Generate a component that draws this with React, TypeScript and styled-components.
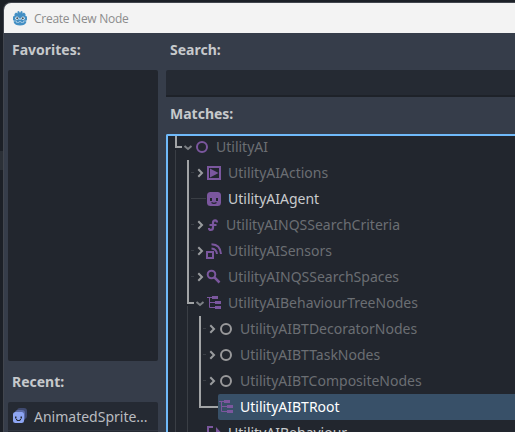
import React from "react";
import styled, { createGlobalStyle } from "styled-components";

const GlobalStyle = createGlobalStyle`
  * { box-sizing: border-box; }
  html, body { margin: 0; height: 100%; overflow: hidden; background: #1c2027; }
  body { font-family: "Noto Sans", sans-serif; font-size: 14px; }
`;

const Desktop = styled.div`
  height: 432px;
  width: 515px;
  padding: 2px 0 0 3px;
  overflow: hidden;
  display: flex;
  background: linear-gradient(#2b3037, #2b3037) 0 151px / 3px 19px no-repeat #1c2027;
`;

const Dialog = styled.div`
  flex: 1;
  min-width: 0;
  display: flex;
  flex-direction: column;
  border: 1px solid #42464e;
  border-width: 1px 0 0 1px;
  border-radius: 8px 0 0 0;
  background: #363d4a;
  overflow: hidden;
`;

const TitleBar = styled.div`
  flex: none;
  height: 30px;
  display: flex;
  align-items: center;
  gap: 7px;
  padding-left: 9px;
  background: #f3f3f3;
  color: #8c8c8c;
  font-family: "Open Sans", sans-serif;
  font-size: 12px;
  letter-spacing: -0.27px;
`;

const Content = styled.div`
  flex: 1;
  min-height: 0;
  display: flex;
  gap: 8px;
  padding-left: 4px;
`;

const Column = styled.div<{ $width?: number }>`
  display: flex;
  flex-direction: column;
  min-width: 0;
  flex: ${(p) => (p.$width ? `0 0 ${p.$width}px` : "1")};
`;

const Heading = styled.div<{ $height: number; $lift?: number }>`
  flex: none;
  height: ${(p) => p.$height}px;
  padding: 0 0 ${(p) => p.$lift ?? 0}px 4px;
  display: flex;
  align-items: center;
  font-weight: 700;
  color: #c6c9cc;
`;

const FavoritesList = styled.div`
  flex: none;
  height: 291px;
  border-radius: 2px;
  background: #22262e;
`;

const RecentList = styled.div`
  flex: 1;
  border-radius: 2px 2px 0 0;
  background: #252a33;
  overflow: hidden;
`;

const RecentItem = styled.div`
  height: 29px;
  display: flex;
  align-items: center;
  gap: 6px;
  padding-left: 4px;
  color: #b9bcc0;
  border-bottom: 1px solid #303640;
  white-space: nowrap;
`;

const SearchField = styled.div`
  flex: none;
  height: 27px;
  border-radius: 2px 0 0 0;
  border-bottom: 2px solid #1e2229;
  background: #252a33;
`;

const Tree = styled.div`
  position: relative;
  flex: 1;
  min-height: 0;
  overflow: hidden;
  border: 2px solid #70bafa;
  border-width: 2px 0 0 2px;
  border-radius: 2px 0 0 0;
  background: #22262e;
`;

const Rows = styled.div`
  margin-top: -2px;
`;

const Guides = styled.svg`
  position: absolute;
  left: 0;
  top: 0;
`;

const TreeRow = styled.div<{ $depth: number }>`
  height: 26px;
  display: flex;
  align-items: stretch;
  padding-left: ${(p) => 14 + p.$depth * 12}px;
`;

const ArrowCell = styled.div`
  width: 12px;
  flex: none;
  display: flex;
  align-items: center;
`;

type Tone = "dim" | "normal" | "selected";

const ItemCell = styled.div<{ $tone: Tone }>`
  flex: 1;
  display: flex;
  align-items: center;
  gap: 6px;
  white-space: nowrap;
  color: ${(p) => ({ dim: "#6b6e73", normal: "#c9cbcd", selected: "#ffffff" })[p.$tone]};
  background: ${(p) => (p.$tone === "selected" ? "#385068" : "transparent")};
  border-radius: 2px 0 0 2px;
`;

const ItemLabel = styled.span`
  padding-bottom: 2px;
`;

type IconName = "ring" | "action" | "agent" | "criteria" | "sensor" | "search" | "tree" | "behaviour";

const PURPLE = "#7b579e";

const Icon = ({ name, color = PURPLE }: { name: IconName; color?: string }) => {
  const width = name === "criteria" ? 14 : 16;
  return (
    <svg width={width} height="16" viewBox={`0 0 ${width} 16`} fill="none" stroke={color} strokeWidth="2">
      {name === "ring" && <circle cx="8" cy="8" r="5" />}
      {name === "action" && (
        <>
          <path d="M2 2h12v12H2z" />
          <path d="M4 3.500v9L12.500 8z" fill={color} stroke="none" />
        </>
      )}
      {name === "agent" && (
        <>
          <rect x="1" y="1" width="14" height="14" rx="3.500" fill={color} stroke="none" />
          <path d="M4 7h2v3H4zM10 7h2v3h-2z" fill="#22262e" stroke="none" />
          <path d="M5.500 11.500q2.500 1.800 5 0" stroke="#22262e" strokeWidth="1.300" />
        </>
      )}
      {name === "criteria" && (
        <path d="M11 5.500Q11 3.300 9.200 3.300Q7 3.300 7 5.800V10.500Q7 13 4.800 13Q3 13 3 11M3.500 8H10.500" strokeWidth="2.200" />
      )}
      {name === "sensor" && (
        <>
          <path d="M1 9h6v6H1z" />
          <path d="M5.500 5.500Q10.500 6 11 11M5.500 1.200Q14.500 1.500 15 11" />
        </>
      )}
      {name === "search" && (
        <>
          <circle cx="5.500" cy="5.500" r="3.800" />
          <path d="M8.200 8.200l5.300 5.300" strokeWidth="2.500" />
        </>
      )}
      {name === "tree" && (
        <>
          <path d="M1 2.500h6M3.500 2v10.500H9M3.500 7.500H9" strokeWidth="1" />
          <path d="M6 1h6v3H6zM9 6h6v3H9zM9 11h6v3H9z" fill={color} stroke="none" />
        </>
      )}
      {name === "behaviour" && (
        <>
          <path d="M7 2H2v11h5" />
          <path d="M10 2v11L15 7.500z" fill={color} stroke="none" />
        </>
      )}
    </svg>
  );
};

const Arrow = ({ open }: { open: boolean }) => (
  <svg width="12" height="12" viewBox="0 0 12 12" fill="none" stroke={open ? "#7d8085" : "#999b9e"} strokeWidth="2">
    {open ? <path d="M2.500 5L6 8l3.500-3" /> : <path d="M4.300 2.300L8 6 4.300 9.700" />}
  </svg>
);

const GodotLogo = () => (
  <svg width="14" height="15" viewBox="0 0 14 15">
    <path
      d="M0 5.500L1.500 5V3L3 1.500 4.500 2.500V.5L6 0l.6 1.500h.8L8 0l1.500.5v2L11 1.500 12.500 3v2l1.500.5V9l-.8.500v2Q12 14.500 7 14.500T.8 11.500v-2L0 9z"
      fill="#438fc4"
    />
    <path d="M1 10h2.500v1.500H6v-1h2v1h2.500V10H13" fill="none" stroke="#b4d3e8" strokeWidth=".7" />
    <circle cx="4" cy="7.200" r="1.700" fill="#e8f2f8" />
    <circle cx="10" cy="7.200" r="1.700" fill="#e8f2f8" />
    <circle cx="4.200" cy="7.300" r="1" fill="#42525e" />
    <circle cx="9.800" cy="7.300" r="1" fill="#42525e" />
    <path d="M6.500 7h1v2h-1z" fill="#e8f2f8" />
  </svg>
);

const AnimatedSpriteIcon = () => (
  <svg width="16" height="16" viewBox="0 0 16 16">
    <rect x="5" y="0" width="10" height="11" rx="3" fill="#3f4a70" />
    <rect x="3" y="2" width="10" height="11" rx="3" fill="#5c6ba5" />
    <rect x="1" y="4" width="11" height="11" rx="2.500" fill="#8da5f3" />
    <path d="M3 8.500h1.500v2H3zM8.500 8.500H10v2H8.500z" fill="#252a33" />
    <path d="M4 11.500h1v1h3v-1h1" fill="none" stroke="#252a33" />
  </svg>
);

interface Item {
  label: string;
  icon: IconName;
  depth: number;
  tone?: Tone;
  arrow?: "open" | "closed";
  color?: string;
}

const items: Item[] = [
  { label: "UtilityAI", icon: "ring", depth: 0, arrow: "open" },
  { label: "UtilityAIActions", icon: "action", depth: 1, arrow: "closed" },
  { label: "UtilityAIAgent", icon: "agent", depth: 1, tone: "normal" },
  { label: "UtilityAINQSSearchCriteria", icon: "criteria", depth: 1, arrow: "closed" },
  { label: "UtilityAISensors", icon: "sensor", depth: 1, arrow: "closed" },
  { label: "UtilityAINQSSearchSpaces", icon: "search", depth: 1, arrow: "closed" },
  { label: "UtilityAIBehaviourTreeNodes", icon: "tree", depth: 1, arrow: "open" },
  { label: "UtilityAIBTDecoratorNodes", icon: "ring", depth: 2, arrow: "closed", color: "#99999b" },
  { label: "UtilityAIBTTaskNodes", icon: "ring", depth: 2, arrow: "closed", color: "#99999b" },
  { label: "UtilityAIBTCompositeNodes", icon: "ring", depth: 2, arrow: "closed", color: "#99999b" },
  { label: "UtilityAIBTRoot", icon: "tree", depth: 2, tone: "selected" },
  { label: "UtilityAIBehaviour", icon: "behaviour", depth: 1, tone: "normal" },
];

const TreeGuides = () => (
  <Guides width="60" height="296" viewBox="168 136 60 296" fill="none" shapeRendering="crispEdges">
    <path
      d="M175.500 150V432M187.500 306V432M191 172.500h3M191 198.500h15M191 224.500h3M191 250.500h3M191 276.500h3M203 328.500h3M203 354.500h3M203 380.500h3"
      stroke="#3a3e45"
    />
    <path d="M176 136V147H182M188 160V303H194M200 316V407H218" stroke="#a2a4a6" strokeWidth="2" />
  </Guides>
);

export default function App() {
  return (
    <>
      <GlobalStyle />
      <Desktop>
        <Dialog>
          <TitleBar>
            <GodotLogo />
            Create New Node
          </TitleBar>
          <Content>
            <Column $width={150}>
              <Heading $height={37} $lift={4}>Favorites:</Heading>
              <FavoritesList />
              <Heading $height={41}>Recent:</Heading>
              <RecentList>
                <RecentItem>
                  <AnimatedSpriteIcon />
                  AnimatedSprite...
                </RecentItem>
              </RecentList>
            </Column>
            <Column>
              <Heading $height={37} $lift={4}>Search:</Heading>
              <SearchField />
              <Heading $height={37} $lift={4}>Matches:</Heading>
              <Tree>
                <TreeGuides />
                <Rows>
                  {items.map((item) => (
                    <TreeRow key={item.label} $depth={item.depth}>
                      <ArrowCell>{item.arrow && <Arrow open={item.arrow === "open"} />}</ArrowCell>
                      <ItemCell $tone={item.tone ?? "dim"}>
                        <Icon name={item.icon} color={item.color} />
                        <ItemLabel>{item.label}</ItemLabel>
                      </ItemCell>
                    </TreeRow>
                  ))}
                </Rows>
              </Tree>
            </Column>
          </Content>
        </Dialog>
      </Desktop>
    </>
  );
}
